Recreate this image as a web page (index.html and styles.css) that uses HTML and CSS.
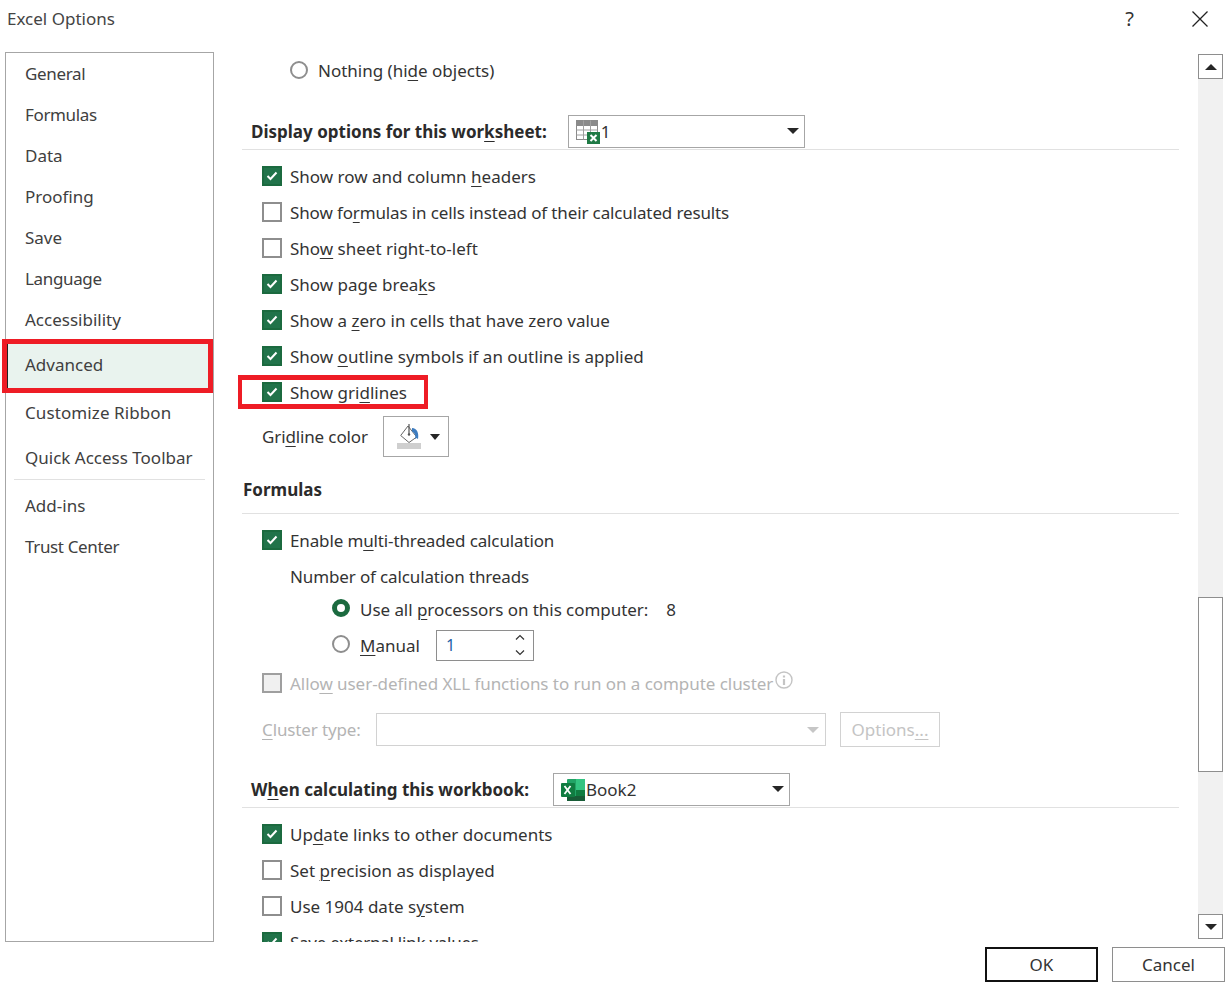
FILE: index.html
```html
<!DOCTYPE html>
<html lang="en">
<head>
<meta charset="utf-8">
<title>Excel Options</title>
<link rel="stylesheet" href="styles.css">
</head>
<body>
<div class="dialog">
  <header class="titlebar">
    <span class="title">Excel Options</span>
    <span class="help">?</span>
    <svg class="close" width="16" height="16" viewBox="0 0 16 16"><path d="M.5.5l15 15M15.5.5l-15 15" stroke="#222" stroke-width="1.3" fill="none"/></svg>
  </header>
  <div class="body">
    <nav class="sidebar">
      <div class="nav-item nav-tight">General</div>
      <div class="nav-item nav-tight">Formulas</div>
      <div class="nav-item">Data</div>
      <div class="nav-item">Proofing</div>
      <div class="nav-item">Save</div>
      <div class="nav-item nav-tight">Language</div>
      <div class="nav-item">Accessibility</div>
      <div class="nav-item nav-active">Advanced<span class="red-box red-nav"></span></div>
      <div class="nav-item nav-tall">Customize Ribbon</div>
      <div class="nav-item nav-qat">Quick Access Toolbar</div>
      <div class="nav-sep"></div>
      <div class="nav-item">Add-ins</div>
      <div class="nav-item nav-tight">Trust Center</div>
    </nav>
    <main class="content">
      <div class="row row-radio-top"><span class="radio"></span><span>Nothing (hi<u>d</u>e objects)</span></div>

      <div class="head head-combo">
        <span class="head-text">Display options for this wor<u>k</u>sheet:</span>
        <div class="combo combo-sheet">
          <svg width="24" height="24" viewBox="0 0 24 24" class="combo-icon">
            <rect x=".5" y=".5" width="21" height="19" fill="#fff" stroke="#8a8a8a"/>
            <rect x=".5" y=".5" width="21" height="5" fill="#8a8a8a" stroke="#8a8a8a"/>
            <path d="M.5 10h21M.5 15h21M7.500 .5v19M14.500 .5v19" stroke="#a0a0a0" fill="none"/>
            <rect x="11" y="12" width="13" height="12" fill="#1f7a45"/>
            <path d="M14.500 15l6 6M20.500 15l-6 6" stroke="#fff" stroke-width="2" fill="none"/>
          </svg>
          <span class="combo-text">1</span>
          <span class="caret"></span>
        </div>
      </div>

      <div class="rows">
        <div class="row"><span class="check on"><svg width="12" height="10" viewBox="0 0 12 10"><path d="M1.5 5l3 3 6-6.5" stroke="#fff" stroke-width="2" fill="none"/></svg></span><span>Show row and column <u>h</u>eaders</span></div>
        <div class="row"><span class="check"></span><span class="tight">Show fo<u>r</u>mulas in cells instead of their calculated results</span></div>
        <div class="row"><span class="check"></span><span>Sho<u>w</u> sheet right-to-left</span></div>
        <div class="row"><span class="check on"><svg width="12" height="10" viewBox="0 0 12 10"><path d="M1.5 5l3 3 6-6.5" stroke="#fff" stroke-width="2" fill="none"/></svg></span><span>Show page brea<u>k</u>s</span></div>
        <div class="row"><span class="check on"><svg width="12" height="10" viewBox="0 0 12 10"><path d="M1.5 5l3 3 6-6.5" stroke="#fff" stroke-width="2" fill="none"/></svg></span><span>Show a <u>z</u>ero in cells that have zero value</span></div>
        <div class="row"><span class="check on"><svg width="12" height="10" viewBox="0 0 12 10"><path d="M1.5 5l3 3 6-6.5" stroke="#fff" stroke-width="2" fill="none"/></svg></span><span>Show <u>o</u>utline symbols if an outline is applied</span></div>
        <div class="row row-marked"><span class="check on"><svg width="12" height="10" viewBox="0 0 12 10"><path d="M1.5 5l3 3 6-6.5" stroke="#fff" stroke-width="2" fill="none"/></svg></span><span>Show gri<u>d</u>lines</span><span class="red-box red-row"></span></div>
      </div>

      <div class="grid-color">
        <span class="tight">Gri<u>d</u>line color</span>
        <div class="color-btn">
          <svg width="26" height="28" viewBox="0 0 26 28">
            <path d="M4.700 12.500L12 3l8.700 11-7.700 5.500z" fill="#fff" stroke="#666" stroke-width="1"/>
            <path d="M13 1v10" stroke="#555" stroke-width="1.2" fill="none"/>
            <circle cx="13" cy="11.500" r="1.2" fill="#555"/>
            <path d="M16 5c5 0 7 5 6 11l-1.600-1-1.400 1c1-3.500 0-6-3-7.500z" fill="#3e7cbf"/>
            <rect x="1" y="20" width="24" height="6" fill="#cfcfcf"/>
          </svg>
          <span class="caret caret-small"></span>
        </div>
      </div>

      <div class="head head-plain"><span class="head-text">Formulas</span></div>

      <div class="rows">
        <div class="row"><span class="check on"><svg width="12" height="10" viewBox="0 0 12 10"><path d="M1.5 5l3 3 6-6.5" stroke="#fff" stroke-width="2" fill="none"/></svg></span><span class="tight">Enable m<u>u</u>lti-threaded calculation</span></div>
        <div class="row row-threads"><span class="tight">Number of calculation threads</span></div>
        <div class="row row-opt"><span class="radio radio-on"></span><span class="tight-less">Use all <u>p</u>rocessors on this computer:</span><span class="count">8</span></div>
        <div class="row row-opt"><span class="radio"></span><span class="manual-label"><u>M</u>anual</span>
          <div class="spin"><span class="spin-val">1</span>
            <svg width="10" height="24" viewBox="0 0 10 24"><path d="M1 6.500l4-4 4 4M1 17.500l4 4 4-4" stroke="#333" stroke-width="1.2" fill="none"/></svg>
          </div>
        </div>
        <div class="row row-disabled"><span class="check check-dis"></span><span class="tight-less">Allo<u>w</u> user-defined XLL functions to run on a compute cluster</span>
          <svg class="info" width="18" height="18" viewBox="0 0 18 18"><circle cx="9" cy="9" r="8" fill="none" stroke="#c4c4c4" stroke-width="1.4"/><path d="M9 4.500v2M9 8v6" stroke="#c4c4c4" stroke-width="2.2"/></svg>
        </div>
        <div class="cluster">
          <span class="cluster-label tight"><u>C</u>luster type:</span>
          <div class="cluster-field"><span class="caret caret-dis"></span></div>
          <div class="cluster-btn">Options<u>...</u></div>
        </div>
      </div>

      <div class="head head-combo head-book">
        <span class="head-text">W<u>h</u>en calculating this workbook:</span>
        <div class="combo combo-book">
          <svg width="24" height="24" viewBox="0 0 24 24" class="combo-icon">
            <rect x="6" y="1" width="18" height="22" rx="1" fill="#21a366"/>
            <rect x="15" y="1" width="9" height="11" fill="#33c481"/>
            <rect x="15" y="12" width="9" height="6" fill="#107c41"/>
            <rect x="6" y="18" width="18" height="5" fill="#185c37"/>
            <rect x="0" y="5" width="14" height="14" rx="1" fill="#107c41"/>
            <path d="M3.500 8l6 8M9.500 8l-6 8" stroke="#fff" stroke-width="1.800" fill="none"/>
          </svg>
          <span class="combo-text">Book2</span>
          <span class="caret"></span>
        </div>
      </div>

      <div class="rows">
        <div class="row"><span class="check on"><svg width="12" height="10" viewBox="0 0 12 10"><path d="M1.5 5l3 3 6-6.5" stroke="#fff" stroke-width="2" fill="none"/></svg></span><span>Up<u>d</u>ate links to other documents</span></div>
        <div class="row"><span class="check"></span><span>Set <u>p</u>recision as displayed</span></div>
        <div class="row"><span class="check"></span><span>Use 1904 date s<u>y</u>stem</span></div>
        <div class="row"><span class="check on"><svg width="12" height="10" viewBox="0 0 12 10"><path d="M1.5 5l3 3 6-6.5" stroke="#fff" stroke-width="2" fill="none"/></svg></span><span class="tight-more">Save external link values</span></div>
      </div>
    </main>
    <div class="scrollbar">
      <div class="sb-btn"><span class="sb-up"></span></div>
      <div class="sb-track sb-track-top"></div>
      <div class="sb-thumb"></div>
      <div class="sb-track sb-track-bottom"></div>
      <div class="sb-btn"><span class="sb-down"></span></div>
    </div>
  </div>
  <footer class="footer">
    <div class="btn btn-default">OK</div>
    <div class="btn">Cancel</div>
  </footer>
</div>
</body>
</html>
```

FILE: styles.css
```css
* { box-sizing: border-box; }
html, body { margin: 0; padding: 0; background: #fff; }
body { font-family: "Noto Sans", "Open Sans", "Liberation Sans", sans-serif; font-size: 17px; color: #333; overflow: hidden; }
u { text-underline-offset: 3px; text-decoration-thickness: 1px; }
.tight { letter-spacing: -0.13px; }
.tight-less { letter-spacing: -0.05px; }
.tight-more { letter-spacing: -0.25px; }
.dialog { width: 1232px; height: 985px; display: flex; flex-direction: column; }

.titlebar { height: 52px; flex: none; display: flex; align-items: flex-start; padding: 8px 24px 0 7px; }
.title { flex: 1; line-height: 22px; color: #444; }
.help { margin-right: 58px; font-size: 20px; line-height: 22px; color: #333; }
.close { margin-top: 3px; }

.body { height: 890px; flex: none; display: flex; }
.sidebar { width: 209px; margin-left: 5px; border: 1px solid #a6a6a6; flex: none; display: flex; flex-direction: column; }
.nav-item { height: 41px; flex: none; display: flex; align-items: center; padding-left: 19px; color: #404040; }
.nav-tight { letter-spacing: -0.35px; }
.nav-active { position: relative; height: 48px; background: #e9f3ee; box-shadow: inset 2px 0 0 #222; }
.nav-tall { height: 48px; letter-spacing: 0.1px; }
.nav-qat { height: 42px; }
.nav-sep { height: 1px; flex: none; margin: 1px 8px 5px 8px; background: #e1e1e1; }
.red-box { position: absolute; border: 5px solid #ee1c25; pointer-events: none; }
.red-nav { left: -4px; top: -1px; width: 211px; height: 54px; }
.red-row { left: -4px; top: 1px; width: 190px; height: 34px; border-width: 5px 4px; }

.content { width: 941px; margin-left: 24px; padding-left: 4px; height: 100%; flex: none; overflow: hidden; }
.row { height: 36px; display: flex; align-items: center; padding-left: 20px; gap: 8px; }
.row-radio-top { padding-left: 48px; gap: 10px; }
.row-marked { position: relative; }
.head { display: flex; align-items: flex-end; border-bottom: 1px solid #e1e1e1; padding-left: 9px; }
.head-text { font-weight: 700; color: #2b2b2b; font-size: 17px; }
.head-combo { height: 62px; padding-bottom: 1px; }
.head-combo .head-text { line-height: 32px; }
.head-plain { height: 57px; padding-left: 1px; padding-bottom: 12px; }
.head-book { height: 62px; }
.rows { margin-top: 8px; }

.combo { width: 237px; height: 33px; border: 1px solid #a6a6a6; display: flex; align-items: center; position: relative; padding-left: 7px; }
.combo-sheet { margin-left: 21px; }
.combo-book { margin-left: 24px; }
.combo-icon { flex: none; }
.combo-text { margin-left: 1px; }
.combo .caret { position: absolute; right: 5px; top: 12px; }
.caret { width: 0; height: 0; border-left: 6px solid transparent; border-right: 6px solid transparent; border-top: 6px solid #262626; display: block; }
.caret-small { border-left-width: 5.500px; border-right-width: 5.500px; }
.caret-dis { border-top-color: #c6c6c6; position: absolute; right: 6px; top: 13px; }

.check { width: 20px; height: 20px; flex: none; border: 2px solid #8e8e8e; background: #fff; display: flex; align-items: center; justify-content: center; }
.check.on { background: #21734a; border-color: #1b6a3f; }
.check-dis { background: #f0f0f0; border-color: #9f9f9f; }
.radio { width: 18px; height: 18px; flex: none; border-radius: 50%; border: 2px solid #8e8e8e; background: #fff; }
.radio-on { border: 5px solid #1b6a3f; }
.row-opt .radio { margin-bottom: 2px; }

.grid-color { height: 41px; margin-top: 6px; display: flex; align-items: center; padding-left: 20px; }
.color-btn { width: 66px; height: 41px; margin-left: 15px; border: 1px solid #a6a6a6; display: flex; align-items: center; padding-left: 12px; gap: 8px; }

.row-threads { height: 33px; padding-left: 48px; padding-top: 4px; }
.row-opt { padding-left: 90px; gap: 10px; }
.count { margin-left: 8px; }
.manual-label { width: 64px; }
.spin { width: 98px; height: 31px; margin-left: 2px; border: 1px solid #8e8e8e; display: flex; align-items: center; justify-content: space-between; padding: 0 8px 0 9px; }
.spin-val { color: #1f5fa8; font-size: 16px; }
.row-disabled { color: #b4b4b4; margin-top: 2px; }
.info { margin-left: -6px; margin-top: -6px; }
.cluster { height: 33px; margin-top: 12px; display: flex; align-items: center; padding-left: 20px; color: #b4b4b4; }
.cluster-label { width: 114px; flex: none; }
.cluster-field { width: 450px; height: 33px; border: 1px solid #d2d2d2; position: relative; }
.cluster-btn { width: 100px; height: 35px; margin-left: 14px; border: 1px solid #d2d2d2; display: flex; align-items: center; justify-content: center; color: #c4c4c4; }

.scrollbar { width: 25px; margin-left: 19px; margin-top: 2px; flex: none; height: 885px; display: flex; flex-direction: column; }
.sb-btn { height: 25px; flex: none; border: 1px solid #8e8e8e; display: flex; align-items: center; justify-content: center; background: #fff; }
.sb-up { border-left: 6px solid transparent; border-right: 6px solid transparent; border-bottom: 6px solid #262626; }
.sb-down { border-left: 6px solid transparent; border-right: 6px solid transparent; border-top: 6px solid #262626; }
.sb-track { background: #f1f1f1; }
.sb-track-top { height: 518px; }
.sb-thumb { height: 175px; flex: none; border: 1px solid #8e8e8e; background: #fff; }
.sb-track-bottom { flex: 1; }

.footer { flex: 1; display: flex; justify-content: flex-end; gap: 14px; padding: 5px 7px 3px 0; }
.btn { width: 113px; height: 35px; border: 1px solid #8e8e8e; display: flex; align-items: center; justify-content: center; color: #333; }
.btn-default { border: 2px solid #111; }
```
